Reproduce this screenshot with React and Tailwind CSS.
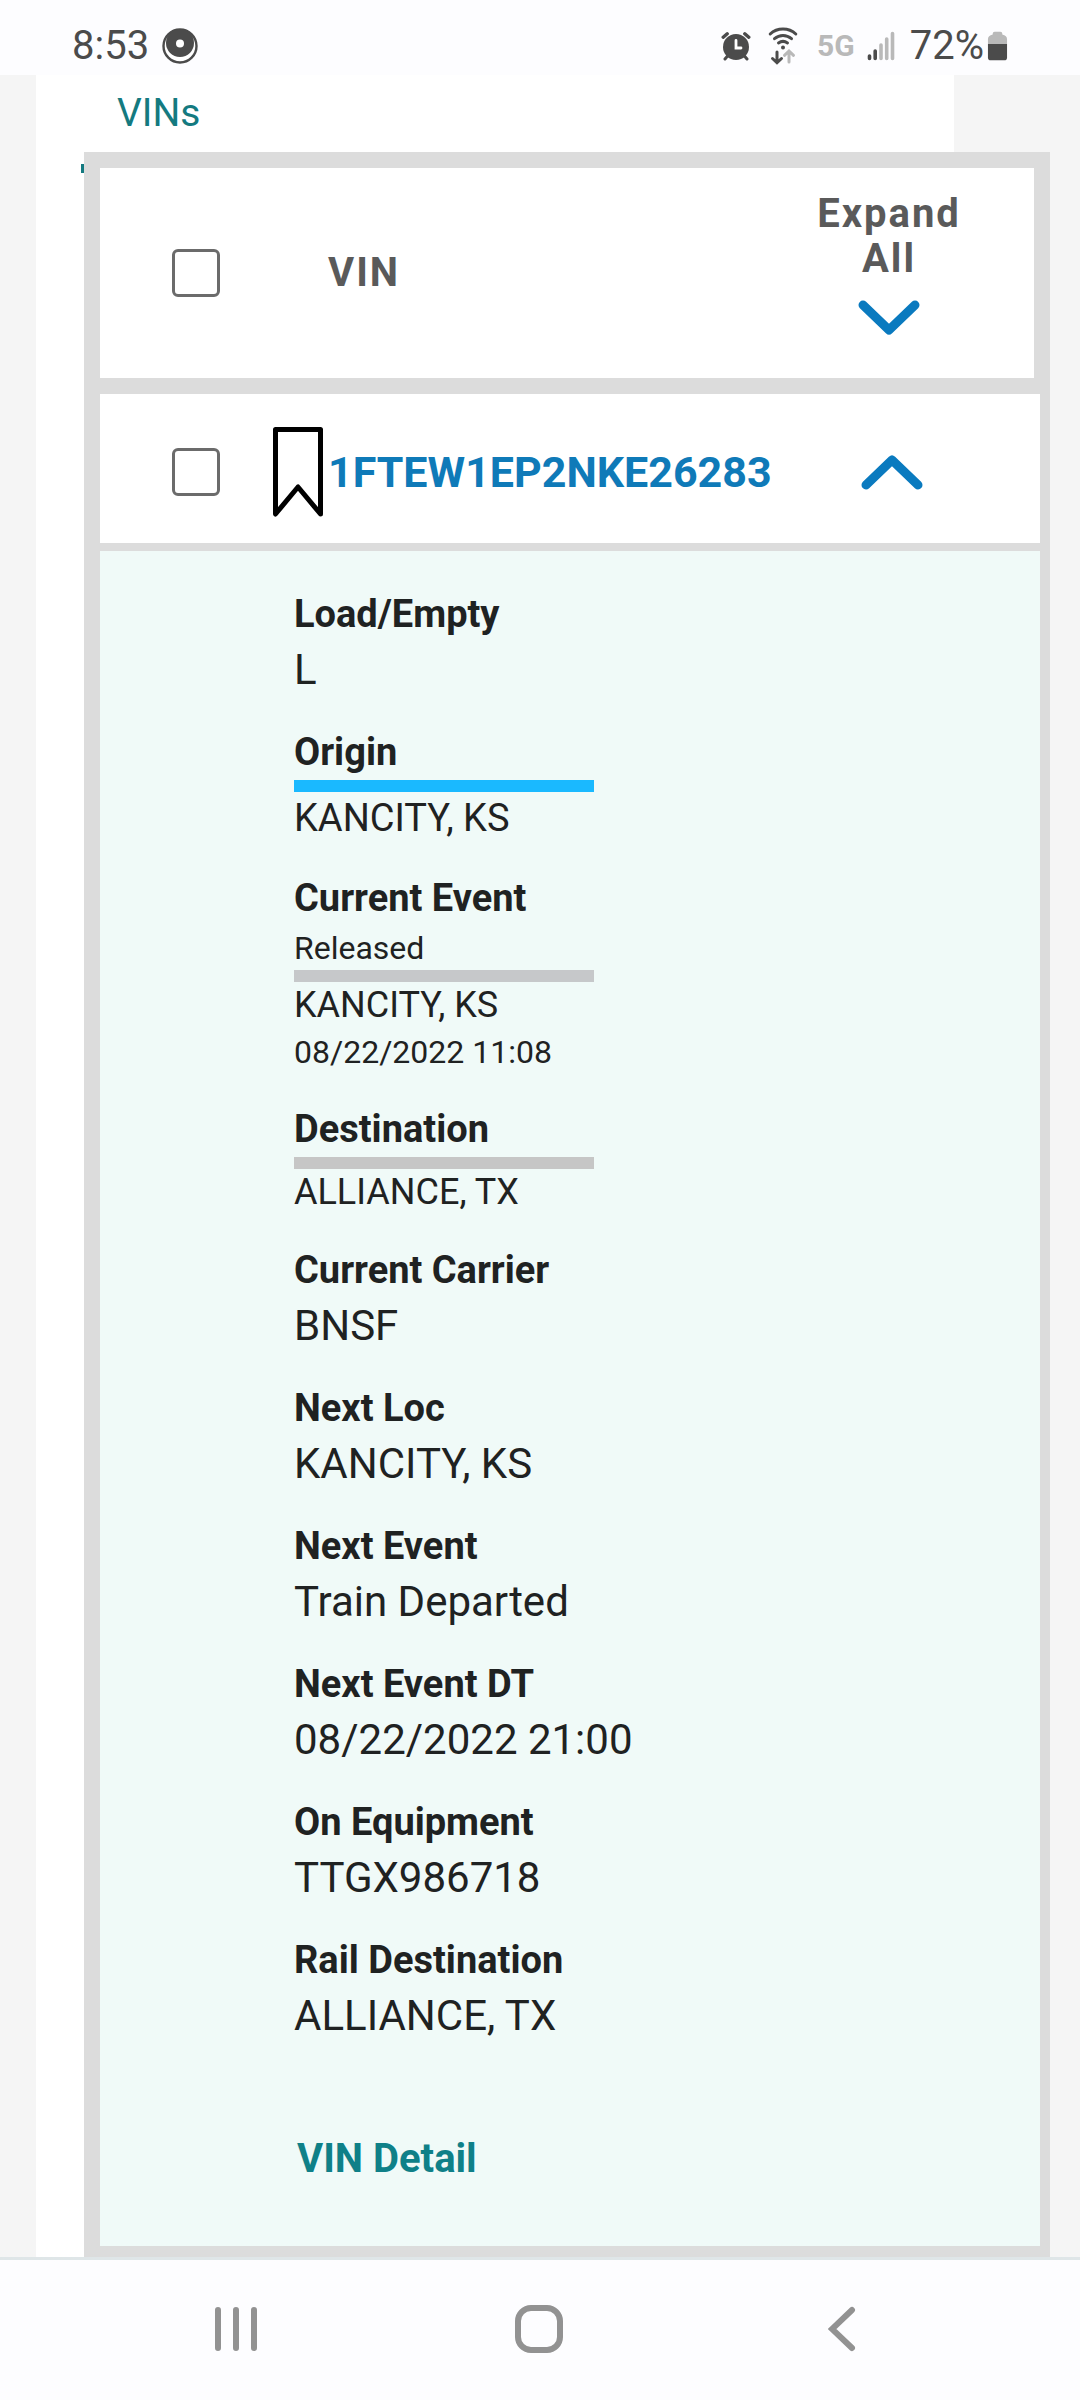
import React, { useState } from "react";

const events = [
  { label: "Load/Empty", value: "L" },
  {
    label: "Origin",
    bar: "bg-[#1ab9ff]",
    value: "KANCITY, KS",
    valueClass: "text-[38px] leading-[52px]",
  },
  {
    label: "Current Event",
    status: "Released",
    bar: "bg-[#c6c8ca]",
    value: "KANCITY, KS",
    valueClass: "text-[36px] leading-[47px]",
    date: "08/22/2022 11:08",
  },
  {
    label: "Destination",
    bar: "bg-[#c6c6c6]",
    value: "ALLIANCE, TX",
    valueClass: "text-[36px] leading-[47px]",
  },
  { label: "Current Carrier", value: "BNSF" },
  { label: "Next Loc", value: "KANCITY, KS" },
  { label: "Next Event", value: "Train Departed" },
  { label: "Next Event DT", value: "08/22/2022 21:00" },
  { label: "On Equipment", value: "TTGX986718" },
  { label: "Rail Destination", value: "ALLIANCE, TX" },
];

const StatusBar = () => (
  <header className="flex h-[75px] items-center justify-between bg-[#fdfdff] pt-[16px] pr-[72px] pl-[72px] text-[#4b4b4b]">
    <div className="flex items-center gap-[13px]">
      <span className="text-[40px] leading-[48px]">8:53</span>
      <svg className="size-[36px]" viewBox="0 0 36 36">
        <circle cx="18" cy="18" r="16.5" fill="#fff" stroke="#4b4b4b" strokeWidth="2.4" />
        <circle cx="18" cy="15" r="14" fill="#4b4b4b" />
        <circle cx="18" cy="15.5" r="4" fill="#fff" />
      </svg>
    </div>
    <div className="flex items-center">
      <svg className="h-[30px] w-[30px]" viewBox="0 0 30 30">
        <g stroke="#4b4b4b" strokeLinecap="round" fill="none">
          <path d="M2.2 6.2 6.2 2.8M27.8 6.2l-4-3.4" strokeWidth="3.4" />
          <path d="m4 28 3-3.5M26 28l-3-3.5" strokeWidth="3" />
        </g>
        <circle cx="15" cy="16" r="13" fill="#4b4b4b" />
        <path d="M15 9.5V17h5" fill="none" stroke="#fff" strokeWidth="2.8" strokeLinecap="round" />
      </svg>
      <svg className="ml-[17px] h-[38px] w-[30px]" viewBox="0 0 30 38">
        <g fill="none" stroke="#4b4b4b" strokeWidth="3" strokeLinecap="round">
          <path d="M2.2 7c7-6.6 18.6-6.6 25.6 0" />
          <path d="M6.5 11.7c5-4.2 12-4.2 17 0" />
          <path d="M10.5 16c2.8-2 6.2-2 9 0" />
          <path d="M9 25v10M4.5 31.5 9 35.8l4.5-4.3" />
          <path d="M21 35V25M16.5 28.3 21 24l4.5 4.3" stroke="#b9b9b9" />
        </g>
        <circle cx="15" cy="20.5" r="2" fill="#4b4b4b" />
      </svg>
      <span className="ml-[19px] text-[30px] leading-[48px] font-bold text-[#b9b9b9]">5G</span>
      <svg className="ml-[12px] h-[30px] w-[28px]" viewBox="0 0 28 30">
        <g strokeWidth="3.6" strokeLinecap="round">
          <path d="M2.5 25v2.5M8.2 20v7.5" stroke="#4b4b4b" />
          <path d="M14 14v13.5M19.7 8v19.5M25.5 2.5v25" stroke="#b9b9b9" />
        </g>
      </svg>
      <span className="ml-[15px] text-[40px] leading-[48px]">72%</span>
      <svg className="ml-[3px] h-[32px] w-[21px]" viewBox="0 0 22 32">
        <path d="M6 3q0-2 2-2h6q2 0 2 2v1q5 1 5 5v5H1V9q0-4 5-5z" fill="#b9b9b9" />
        <path d="M1 14h20v14q0 3-3 3H4q-3 0-3-3z" fill="#4b4b4b" />
      </svg>
    </div>
  </header>
);

const Checkbox = ({ label }) => (
  <input
    type="checkbox"
    aria-label={label}
    className="size-[48px] shrink-0 appearance-none rounded-[6px] border-[3px] border-[#6b6b6b] bg-white checked:bg-[#0a7abf]"
  />
);

const Chevron = ({ up }) => (
  <svg className="h-[36px] w-[62px]" viewBox="0 0 62 36" fill="none">
    <path
      d={up ? "M5 31 31 6l26 25" : "M5 5l26 25L57 5"}
      stroke="#0a7abf"
      strokeWidth="9"
      strokeLinecap="round"
      strokeLinejoin="round"
    />
  </svg>
);

const EventItem = ({ item }) => (
  <div>
    <dt className="text-[38px] leading-[56px] font-bold">{item.label}</dt>
    {item.status && <dd className="text-[32px] leading-[44px]">{item.status}</dd>}
    {item.bar && <dd aria-hidden="true" className={`h-[12px] w-[300px] ${item.bar}`} />}
    <dd className={item.valueClass || "text-[42px] leading-[56px]"}>{item.value}</dd>
    {item.date && <dd className="text-[32px] leading-[46px]">{item.date}</dd>}
  </div>
);

const NavigationBar = () => (
  <nav className="grid h-[144px] grid-cols-3 justify-items-center border-t-[3px] border-[#dfe6e8] bg-[#fdfdff] pr-[87px] pb-[4px] pl-[84px]">
    <button aria-label="Recent apps" className="px-4">
      <svg className="h-[46px] w-[44px]" viewBox="0 0 44 46" stroke="#929292" strokeWidth="6" strokeLinecap="round">
        <path d="M4 4v38M22 4v38M40 4v38" />
      </svg>
    </button>
    <button aria-label="Home" className="px-4">
      <svg className="size-[48px]" viewBox="0 0 48 48" fill="none" stroke="#929292" strokeWidth="6">
        <rect x="3" y="3" width="42" height="42" rx="13" />
      </svg>
    </button>
    <button aria-label="Back" className="px-4">
      <svg className="h-[46px] w-[28px]" viewBox="0 0 28 46" fill="none" stroke="#929292" strokeWidth="6" strokeLinecap="round">
        <path d="M24 4 4 23l20 19" />
      </svg>
    </button>
  </nav>
);

const App = () => {
  const [expanded, setExpanded] = useState(true);
  return (
    <div className="flex min-h-screen flex-col bg-[#f5f5f5] font-[Roboto,'Liberation_Sans',sans-serif]">
      <StatusBar />
      <main className="mr-[126px] ml-[36px] flex-1 bg-white pl-[45px]">
        <div className="relative h-[77px] pt-[14px] pl-[36px]">
          <a href="#vins" className="text-[39px] leading-[48px] text-[#147a80]">
            VINs
          </a>
          <span className="absolute -bottom-[21px] left-0 h-[9px] w-[160px] bg-[#147a80]" />
        </div>
        <section id="vins" className="relative -mr-[96px] ml-[3px] bg-[#dcdcdc] pt-[16px] pb-[11px] pl-[16px]">
          <div className="mr-[16px] mb-[16px] flex h-[210px] bg-white pr-[45px] pl-[72px]">
            <div className="flex flex-1 items-center">
              <Checkbox label="Select all VINs" />
              <span className="ml-[108px] text-[40px] leading-[48px] font-bold tracking-wider text-[#5a5a5a]">VIN</span>
            </div>
            <button
              className="flex w-[200px] flex-col items-center pt-[23px] text-[40px] leading-[45px] font-bold tracking-wider text-[#5a5a5a]"
              onClick={() => setExpanded(true)}
            >
              <span>Expand</span>
              <span className="mb-[19px]">All</span>
              <Chevron />
            </button>
          </div>
          <div className="mr-[10px] mb-[8px] flex h-[149px] items-center bg-white pt-[6px] pr-[48px] pl-[72px]">
            <Checkbox label="Select 1FTEW1EP2NKE26283" />
            <button aria-label="Bookmark" className="ml-[53px]">
              <svg className="h-[90px] w-[50px]" viewBox="0 0 50 90" fill="none" stroke="#000" strokeWidth="5" strokeLinejoin="round">
                <path d="M2.5 2.5h45V87L25 60 2.5 87z" />
              </svg>
            </button>
            <a href="#detail" className="ml-[5px] flex-1 text-[43px] leading-[48px] font-bold text-[#0f7ab8]">
              1FTEW1EP2NKE26283
            </a>
            <button
              aria-label="Toggle details"
              aria-expanded={expanded}
              className="flex w-[200px] justify-center"
              onClick={() => setExpanded(!expanded)}
            >
              <Chevron up={expanded} />
            </button>
          </div>
          {expanded && (
            <div id="detail" className="mr-[10px] bg-[#f0faf8] pt-[35px] pb-[59px] pl-[194px] text-[#1f2222]">
              <dl className="flex flex-col gap-[26px]">
                {events.map((item) => (
                  <EventItem key={item.label} item={item} />
                ))}
              </dl>
              <a
                href="#vin-detail"
                className="mt-[87px] ml-[3px] block text-[40px] leading-[56px] font-bold text-[#0f8088]"
              >
                VIN Detail
              </a>
            </div>
          )}
        </section>
      </main>
      <NavigationBar />
    </div>
  );
};

export default App;
